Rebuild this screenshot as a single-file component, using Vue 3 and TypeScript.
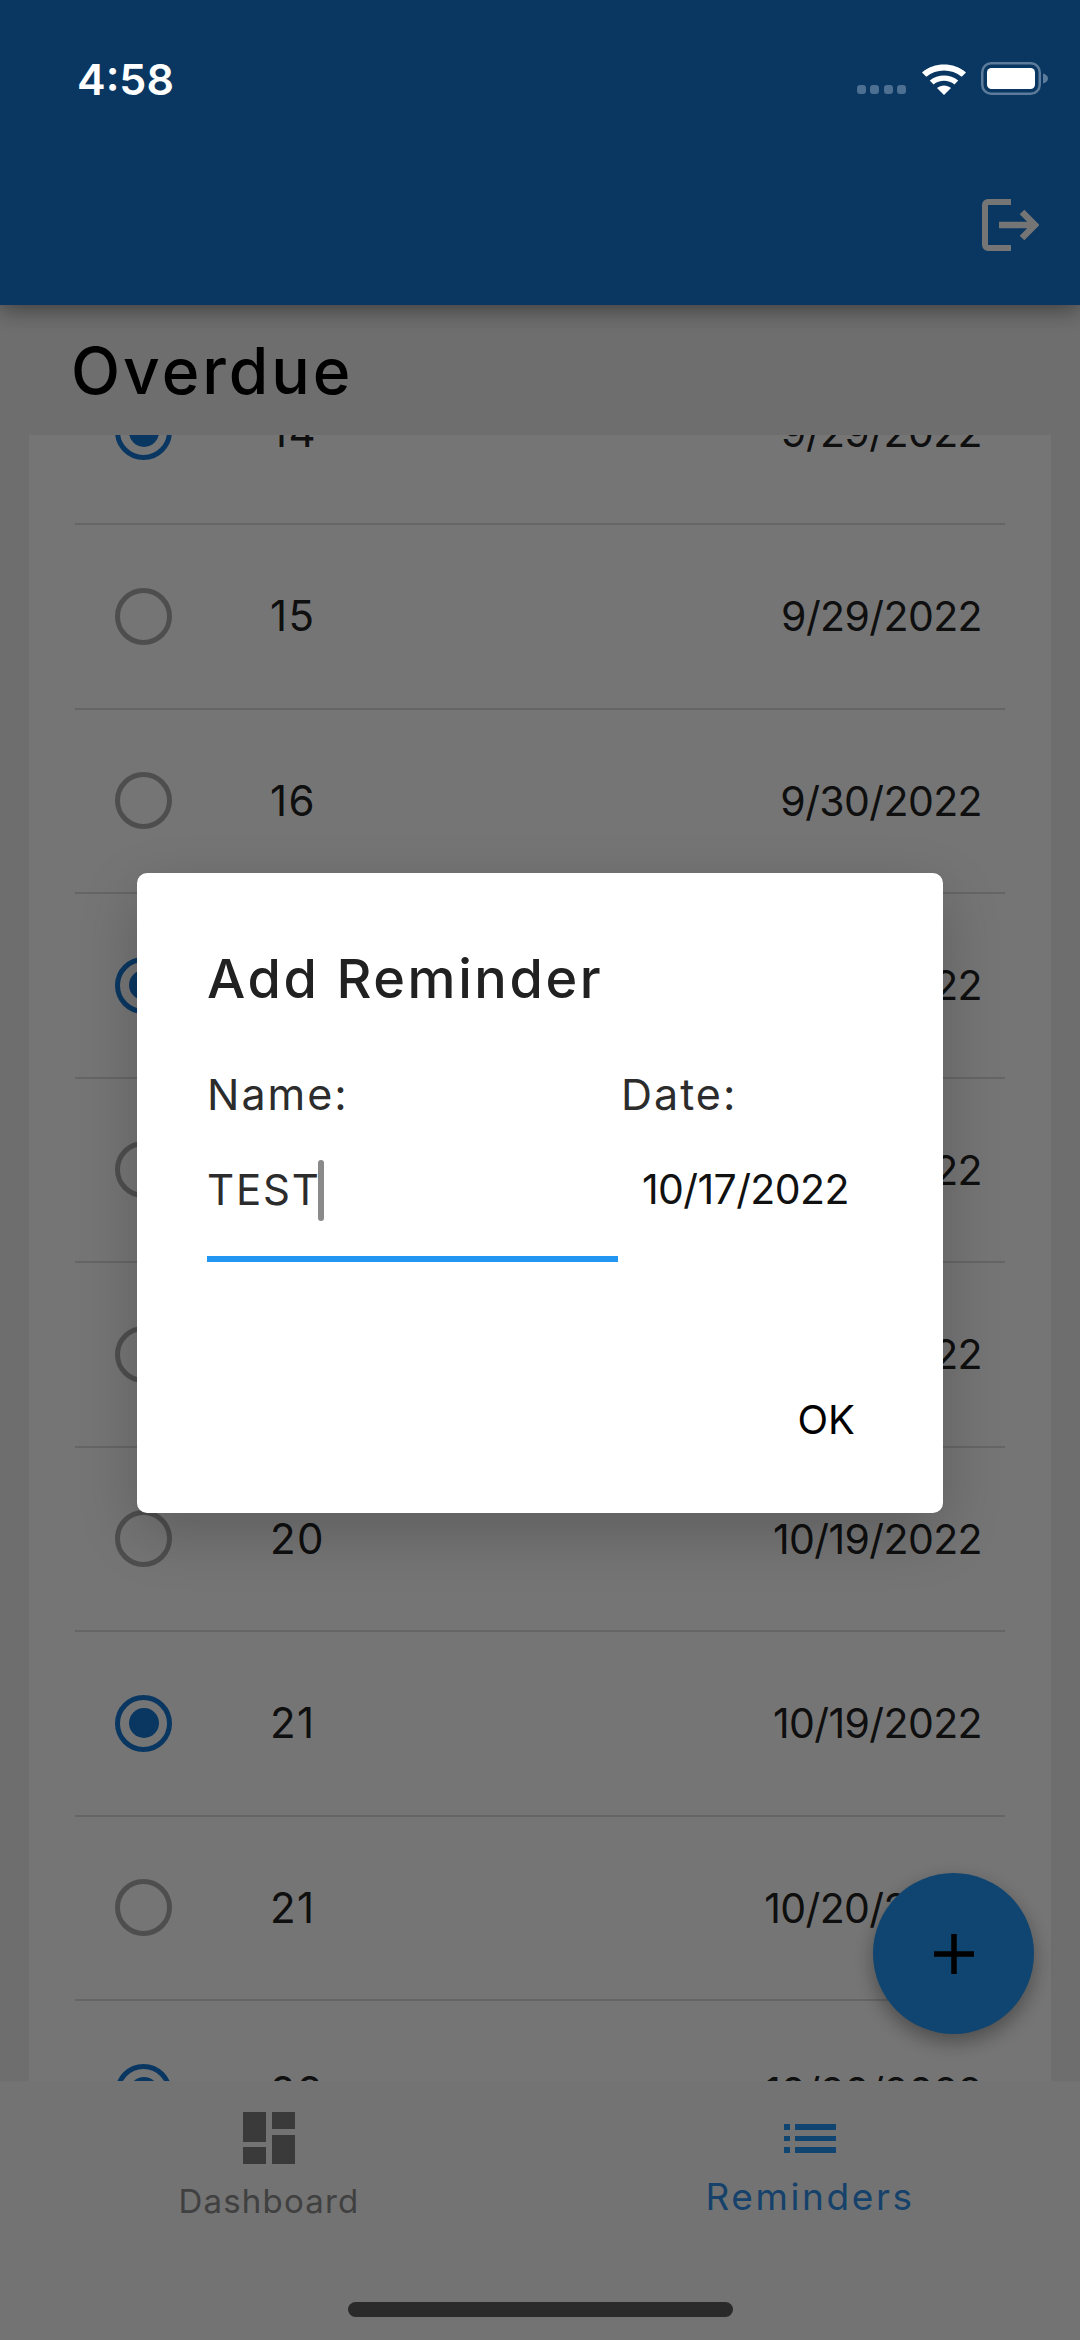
<script setup lang="ts">
interface Reminder {
  name: string
  date: string
  done: boolean
}

const reminders: Reminder[] = [
  { name: '14', date: '9/29/2022', done: true },
  { name: '15', date: '9/29/2022', done: false },
  { name: '16', date: '9/30/2022', done: false },
  { name: '17', date: '10/1/2022', done: true },
  { name: '18', date: '10/2/2022', done: false },
  { name: '19', date: '10/3/2022', done: false },
  { name: '20', date: '10/19/2022', done: false },
  { name: '21', date: '10/19/2022', done: true },
  { name: '21', date: '10/20/2022', done: false },
  { name: '22', date: '10/20/2022', done: true }
]
</script>

<template>
  <div class="screen">
    <header class="app-bar">
      <svg class="logout" width="57" height="56" viewBox="0 0 57 56">
        <path d="M29 5H6a3 3 0 0 0-3 3v40a3 3 0 0 0 3 3h23" fill="none" stroke="#fff" stroke-width="6" />
        <path d="M17 28h35M40 15l13 13-13 13" fill="none" stroke="#fff" stroke-width="6.5" />
      </svg>
    </header>

    <h1 class="section-title">Overdue</h1>

    <main class="list-clip">
      <div class="list-card">
        <div v-for="(r, i) in reminders" :key="i" class="row">
          <span class="radio" :class="{ on: r.done }"></span>
          <span class="row-name">{{ r.name }}</span>
          <span class="row-date">{{ r.date }}</span>
        </div>
      </div>
    </main>

    <nav class="bottom-nav">
      <div class="tabs">
        <div class="tab">
          <svg class="tab-icon" width="52" height="52" viewBox="0 0 52 52" fill="#7e7e7e">
            <rect x="0" y="0" width="23" height="30" />
            <rect x="29" y="0" width="23" height="17" />
            <rect x="0" y="35" width="23" height="17" />
            <rect x="29" y="23" width="23" height="29" />
          </svg>
          <span class="tab-label">Dashboard</span>
        </div>
        <div class="tab active">
          <svg class="tab-icon" width="52" height="52" viewBox="0 0 52 52" fill="#2196f3">
            <rect x="0" y="12" width="6" height="6" />
            <rect x="11" y="12" width="41" height="6" />
            <rect x="0" y="24" width="6" height="5" />
            <rect x="11" y="24" width="41" height="5" />
            <rect x="0" y="35" width="6" height="6" />
            <rect x="11" y="35" width="41" height="6" />
          </svg>
          <span class="tab-label">Reminders</span>
        </div>
      </div>
      <div class="home-bar"></div>
    </nav>

    <button class="fab" type="button">
      <svg width="42" height="42" viewBox="0 0 42 42">
        <path d="M21 1v40M1 21h40" stroke="#000" stroke-width="5.5" />
      </svg>
    </button>

    <div class="scrim">
      <section class="dialog">
        <h2 class="dialog-title">Add Reminder</h2>
        <div class="fields">
          <div class="field-name">
            <label class="field-label">Name:</label>
            <div class="input">TEST<span class="caret"></span></div>
          </div>
          <div class="field-date">
            <label class="field-label">Date:</label>
            <div class="date-value">10/17/2022</div>
          </div>
        </div>
        <div class="actions">
          <span class="ok">OK</span>
        </div>
      </section>
    </div>

    <div class="status-bar">
      <span class="clock">4:58</span>
      <div class="status-icons">
        <span class="signal"><i></i><i></i><i></i><i></i></span>
        <svg class="wifi" width="44" height="32" viewBox="0 0 44 32">
          <path d="M22 32 15 25c4-3.4 10-3.4 14 0Z" fill="#fff" />
          <path d="M11.5 21.5 7.8 17.4c8-6.6 20.4-6.6 28.4 0l-3.7 4.1c-6-4.9-15-4.9-21 0Z" fill="#fff" />
          <path d="M4.3 13.8 0 9.4C12.400-1 31.600-1 44 9.400l-4.300 4.400C29.500 5.400 14.500 5.400 4.300 13.800Z" fill="#fff" />
        </svg>
        <svg class="battery" width="67" height="33" viewBox="0 0 67 33">
          <rect x="1.250" y="1.250" width="57.500" height="30.500" rx="9" fill="none" stroke="#5d7c9b" stroke-width="2.500" />
          <rect x="6" y="6" width="48" height="21" rx="4.500" fill="#fff" />
          <path d="M62 11.500c3 .8 5 2.600 5 5s-2 4.200-5 5Z" fill="#5d7c9b" />
        </svg>
      </div>
    </div>
  </div>
</template>

<style>
html,
body {
  margin: 0;
  background: #757575;
}
</style>

<style scoped>
.screen {
  position: relative;
  width: 1080px;
  height: 2340px;
  overflow: hidden;
  display: flex;
  flex-direction: column;
  background: #f0f0f0;
  font-family: Inter, "Liberation Sans", sans-serif;
  color: #000;
}

.app-bar {
  flex: none;
  height: 305px;
  display: flex;
  justify-content: flex-end;
  align-items: flex-end;
  padding: 0 41px 52px 0;
  box-sizing: border-box;
  background: #1678d3;
  box-shadow: 0 4px 22px rgba(0, 0, 0, 0.45);
  position: relative;
  z-index: 2;
}

.logout {
  display: block;
}

.section-title {
  flex: none;
  height: 130px;
  margin: 0;
  padding: 29px 0 0 71px;
  box-sizing: border-box;
  font-size: 64px;
  line-height: 74px;
  font-weight: 500;
  letter-spacing: 3px;
}

.list-clip {
  flex: 1;
  min-height: 0;
  overflow: hidden;
  margin: 0 29px;
  background: #fff;
}

.list-card {
  margin-top: -94.5px;
  padding: 0 46px;
}

.row {
  height: 184.5px;
  box-sizing: border-box;
  display: flex;
  align-items: center;
  border-bottom: 2px solid #dcdcdc;
}

.radio {
  flex: none;
  position: relative;
  width: 57px;
  height: 57px;
  margin-left: 40px;
  box-sizing: border-box;
  border: 5.5px solid #aaa;
  border-radius: 50%;
}

.radio.on {
  border-color: #1678d3;
}

.radio.on::after {
  content: "";
  position: absolute;
  inset: 8.5px;
  border-radius: 50%;
  background: #1678d3;
}

.row-name {
  margin-left: 98px;
  font-size: 42px;
  line-height: 50px;
  letter-spacing: 1.4px;
  color: #222;
}

.row-date {
  margin-left: auto;
  margin-right: 23px;
  font-size: 41px;
  line-height: 50px;
  letter-spacing: -0.6px;
  color: #222;
}

.bottom-nav {
  flex: none;
  height: 259px;
  background: #fbfbfb;
  position: relative;
  z-index: 1;
  display: flex;
  flex-direction: column;
}

.tabs {
  display: grid;
  grid-template-columns: 1fr 1fr;
  height: 221px;
}

.tab {
  display: flex;
  flex-direction: column;
  align-items: center;
  padding-top: 31px;
  box-sizing: border-box;
  color: #8c8c8c;
}

.tab:first-child {
  padding-right: 2px;
}

.tab.active {
  color: #2f8fe6;
}

.tab-icon {
  display: block;
}

.tab-label {
  margin-top: 17px;
  font-size: 33px;
  line-height: 40px;
  letter-spacing: 1.2px;
}

.tab.active .tab-label {
  font-size: 37px;
  margin-top: 10px;
  line-height: 46px;
  letter-spacing: 2.6px;
}

.home-bar {
  width: 385px;
  height: 15px;
  margin: 0 auto;
  border-radius: 8px;
  background: #5c5c5c;
}

.fab {
  position: absolute;
  left: 873px;
  top: 1873px;
  width: 161px;
  height: 161px;
  z-index: 1;
  padding: 0;
  border: none;
  border-radius: 50%;
  background: #2196f3;
  box-shadow: 0 8px 20px rgba(0, 0, 0, 0.35);
  display: flex;
  align-items: center;
  justify-content: center;
}

.scrim {
  position: absolute;
  inset: 0;
  z-index: 3;
  padding-top: 873px;
  box-sizing: border-box;
  background: rgba(0, 0, 0, 0.54);
}

.dialog {
  width: 806px;
  height: 640px;
  margin: 0 auto;
  padding: 73.5px 70px 0;
  box-sizing: border-box;
  background: #fff;
  border-radius: 10px;
  box-shadow: 0 20px 60px rgba(0, 0, 0, 0.2);
  display: flex;
  flex-direction: column;
}

.dialog-title {
  margin: 0;
  font-size: 54px;
  line-height: 64px;
  font-weight: 500;
  letter-spacing: 2.6px;
  color: #212121;
}

.fields {
  display: flex;
  gap: 3px;
  margin-top: 58.5px;
}

.field-name {
  flex: none;
  width: 411px;
}

.field-label {
  display: block;
  font-size: 43px;
  line-height: 50px;
  letter-spacing: 2px;
  color: #2c2c2c;
}

.input {
  display: flex;
  align-items: center;
  height: 138px;
  margin-top: 5px;
  box-sizing: border-box;
  border-bottom: 6px solid #2196f3;
  font-size: 42px;
  line-height: 50px;
  letter-spacing: 1.8px;
  color: #2c2c2c;
}

.caret {
  width: 6px;
  height: 61px;
  margin-left: -3px;
  border-radius: 3px;
  background: #8a8a8a;
}

.date-value {
  margin-top: 45px;
  padding-left: 21px;
  font-size: 41px;
  line-height: 50px;
  letter-spacing: -0.6px;
  white-space: nowrap;
  color: #111;
}

.actions {
  display: flex;
  justify-content: flex-end;
  margin-top: 133px;
  padding-right: 18px;
}

.ok {
  font-size: 40px;
  line-height: 50px;
  color: #000;
}

.status-bar {
  position: absolute;
  top: 0;
  left: 0;
  right: 0;
  z-index: 4;
  height: 130px;
  padding: 52px 32px 0 77px;
  box-sizing: border-box;
  display: flex;
  justify-content: space-between;
  align-items: flex-start;
}

.clock {
  font-size: 43px;
  line-height: 54px;
  font-weight: 600;
  color: #fff;
}

.status-icons {
  display: flex;
  align-items: flex-start;
  padding-top: 10px;
}

.signal {
  display: flex;
  gap: 4.500px;
  margin-top: 23px;
  margin-right: 16px;
}

.signal i {
  width: 9px;
  height: 9px;
  border-radius: 3px;
  background: #4d6f92;
}

.wifi {
  display: block;
  margin-top: 1px;
  margin-right: 15px;
}

.battery {
  display: block;
}
</style>
